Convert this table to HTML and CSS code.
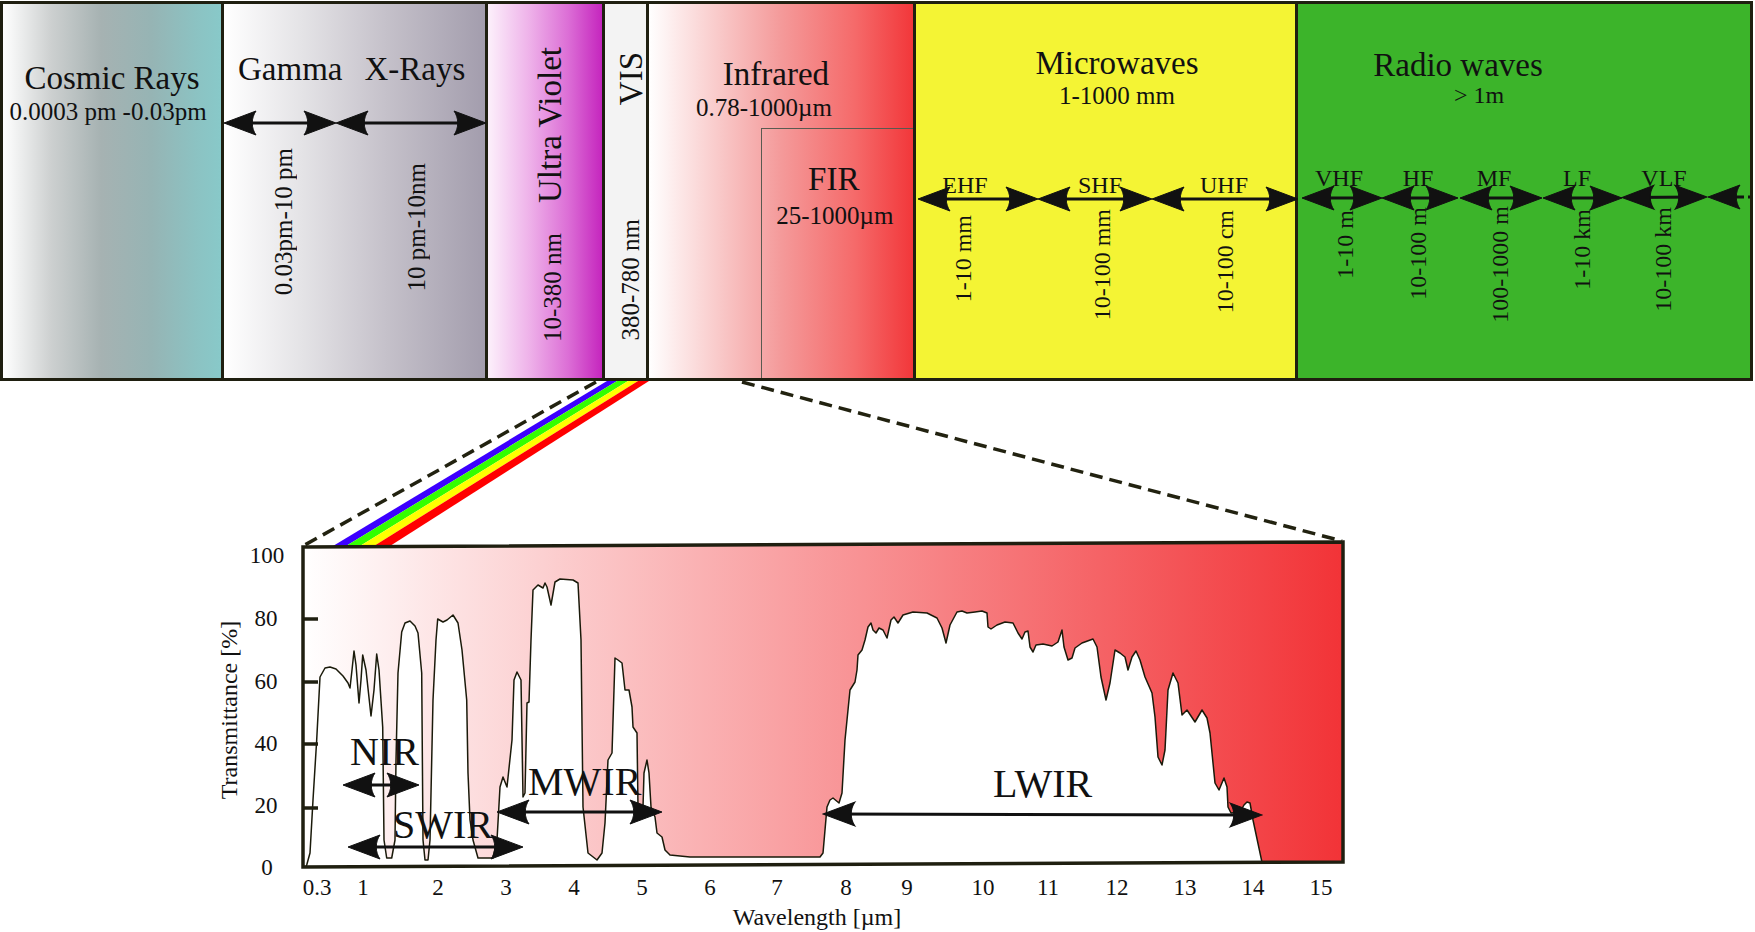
FILE: index.html
```html
<!DOCTYPE html>
<html lang="en">
<head>
<meta charset="utf-8">
<title>Electromagnetic spectrum</title>
<link rel="stylesheet" href="styles.css">
</head>
<body>
<div class="spectrum">
  <div class="band cosmic">
    <div class="title">Cosmic Rays</div>
    <div class="sub cosmic-sub">0.0003 pm -0.03pm</div>
  </div>
  <div class="band gx">
    <div class="gx-titles">
      <span class="title">Gamma</span>
      <span class="title">X-Rays</span>
    </div>
    <svg class="arrows gx-arrows" width="261" height="30" viewBox="0 0 261 30">
      <line class="arw" x1="6" y1="15" x2="106" y2="15" marker-start="url(#ah)" marker-end="url(#ah)"/>
      <line class="arw" x1="118" y1="15" x2="256" y2="15" marker-start="url(#ah)" marker-end="url(#ah)"/>
    </svg>
    <div class="gx-vert">
      <span class="vt small v1">0.03pm-10 pm</span>
      <span class="vt small v2">10 pm-10nm</span>
    </div>
  </div>
  <div class="band uv">
    <span class="vt title uv-title">Ultra Violet</span>
    <span class="vt small uv-range">10-380 nm</span>
  </div>
  <div class="band vis">
    <span class="vt title vis-title">VIS</span>
    <span class="vt small vis-range">380-780 nm</span>
  </div>
  <div class="band ir">
    <div class="title ir-title">Infrared</div>
    <div class="sub ir-sub">0.78-1000µm</div>
    <div class="fir">
      <div class="title fir-title">FIR</div>
      <div class="sub fir-sub">25-1000µm</div>
    </div>
  </div>
  <div class="band mw">
    <div class="title mw-title">Microwaves</div>
    <div class="sub mw-sub">1-1000 mm</div>
    <svg class="arrows mw-arrows" width="379" height="38" viewBox="0 0 379 38">
      <text class="arr-lbl" x="49" y="23">EHF</text>
      <text class="arr-lbl" x="184" y="23">SHF</text>
      <text class="arr-lbl" x="308" y="23">UHF</text>
      <line class="arw" x1="8" y1="29" x2="116" y2="29" marker-start="url(#ah)" marker-end="url(#ah)"/>
      <line class="arw" x1="128" y1="29" x2="230" y2="29" marker-start="url(#ah)" marker-end="url(#ah)"/>
      <line class="arw" x1="242" y1="29" x2="376" y2="29" marker-start="url(#ah)" marker-end="url(#ah)"/>
    </svg>
    <div class="mw-vert">
      <span class="vt tiny m1">1-10 mm</span>
      <span class="vt tiny m2">10-100 mm</span>
      <span class="vt tiny m3">10-100 cm</span>
    </div>
  </div>
  <div class="band radio">
    <div class="title radio-title">Radio waves</div>
    <div class="tiny radio-sub">&gt; 1m</div>
    <svg class="arrows radio-arrows" width="452" height="38" viewBox="0 0 452 38">
      <text class="arr-lbl" x="41" y="16">VHF</text>
      <text class="arr-lbl" x="120" y="16">HF</text>
      <text class="arr-lbl" x="196" y="16">MF</text>
      <text class="arr-lbl" x="279" y="16">LF</text>
      <text class="arr-lbl" x="366" y="16">VLF</text>
      <line class="arw" x1="10" y1="28" x2="78" y2="28" marker-start="url(#ah)" marker-end="url(#ah)"/>
      <line class="arw" x1="90" y1="28" x2="154" y2="28" marker-start="url(#ah)" marker-end="url(#ah)"/>
      <line class="arw" x1="168" y1="28" x2="238" y2="28" marker-start="url(#ah)" marker-end="url(#ah)"/>
      <line class="arw" x1="251" y1="28" x2="318" y2="28" marker-start="url(#ah)" marker-end="url(#ah)"/>
      <line class="arw" x1="330" y1="27.5" x2="403" y2="27" marker-start="url(#ah)" marker-end="url(#ah)"/>
      <line class="arw" x1="416" y1="27" x2="440" y2="27" marker-start="url(#ah)"/>
      <line class="arw-dash" x1="440" y1="27" x2="452" y2="27"/>
    </svg>
    <div class="radio-vert">
      <span class="vt tiny r1">1-10 m</span>
      <span class="vt tiny r2">10-100 m</span>
      <span class="vt tiny r3">100-1000 m</span>
      <span class="vt tiny r4">1-10 km</span>
      <span class="vt tiny r5">10-100 km</span>
    </div>
  </div>
</div>

<svg class="chart" width="1755" height="551" viewBox="0 381 1755 551">
  <defs>
    <linearGradient id="plotGrad" x1="0" y1="0" x2="1" y2="0">
      <stop offset="0" stop-color="#ffffff"/>
      <stop offset="1" stop-color="#f23337"/>
    </linearGradient>
    <marker id="ah" markerUnits="userSpaceOnUse" markerWidth="40" markerHeight="30" viewBox="-30 -15 40 30" refX="0" refY="0" orient="auto-start-reverse" overflow="visible">
      <path d="M6 0 L-26 -12 C-21 -5 -21 5 -26 12 Z" fill="#111" stroke="#111" stroke-width="1"/>
    </marker>
  </defs>

  <line class="dash" x1="596" y1="382" x2="303" y2="546"/>
  <line class="dash" x1="742" y1="382" x2="1342" y2="541"/>

  <polygon class="rb-blue" points="607,381 617,381 346,546 333,546"/>
  <polygon class="rb-green" points="617,381 628,381 360,546 346,546"/>
  <polygon class="rb-yellow" points="628,381 638,381 374,546 360,546"/>
  <polygon class="rb-red" points="638,381 649,381 390,546 374,546"/>

  <polygon class="plot-bg" points="303,547 1343,542 1343,862 303,867" fill="url(#plotGrad)"/>

  <path class="curve" d="M306,867 L306.7,865 L310,853 L313,800 L316.7,740 L320,677 L325,668 L330,667 L336,669 L343,676 L348,683 L350,688 L352,670 L354,651 L356,665 L359,703 L361,680 L362.7,655 L366,670 L371,716 L374,690 L376.7,654 L379,670 L382.7,727 L384,840 L386.7,858 L391.7,858 L395,840 L396,760 L398,673 L401.7,632 L405,623 L410,621 L415,626 L418,633 L421.7,673 L423,840 L425,860 L428,860 L430,840 L433,700 L436,640 L437.7,619 L443,622 L447,620 L453,615 L458,623 L462,650 L466.7,700 L468,773 L470,820 L473,840 L478,858 L493,858 L497,840 L500,787 L503,777 L507,787 L512,740 L514,680 L517,672 L521,680 L523,797 L525,793 L527,703 L529,702 L531,640 L533,590 L538,585 L543,588 L545,583 L547,587 L551,605 L555,582 L560,579 L573,580 L578,583 L581,640 L583,807 L588,853 L597,860 L602,853 L605,823 L608,760 L612,753 L615,658 L618,660 L622,663 L625,690 L629,690 L632,707 L633,727 L637,733 L638,807 L643,807 L644,773 L647,760 L649,773 L651,807 L655,817 L657,833 L662,837 L665,850 L670,855 L690,857 L820,857 L823,853 L827,807 L830,800 L833,798 L839,803 L842,793 L845,740 L850,690 L855,682 L857,670 L858,655 L862,650 L865,640 L868,627 L871,623 L873,630 L876,633 L879,628 L883,630 L887,638 L891,620 L894,617 L898,623 L903,615 L913,612 L927,613 L937,618 L942,628 L946,643 L950,625 L957,612 L962,611 L967,613 L975,612 L982,611 L987,613 L988,627 L991,629 L997,625 L1005,622 L1013,623 L1018,633 L1022,639 L1025,632 L1028,631 L1030,647 L1033,652 L1036,645 L1043,644 L1052,646 L1058,642 L1062,630 L1064,647 L1068,660 L1072,658 L1075,648 L1082,643 L1093,639 L1097,647 L1101,677 L1106,700 L1110,683 L1115,650 L1120,653 L1125,657 L1128,670 L1132,657 L1136,651 L1140,660 L1145,677 L1152,693 L1155,717 L1158,757 L1162,765 L1165,750 L1168,690 L1173,673 L1178,683 L1182,715 L1187,710 L1195,722 L1202,710 L1207,718 L1210,733 L1215,783 L1219,790 L1224,778 L1227,787 L1228,807 L1231,813 L1240,812 L1244,805 L1247,802 L1250,803 L1253,820 L1262,862.4 Z"/>

  <polygon class="frame" points="303,547 1343,542 1343,862 303,867"/>

  <line class="tick" x1="303" y1="619" x2="318" y2="619"/>
  <line class="tick" x1="303" y1="682" x2="318" y2="682"/>
  <line class="tick" x1="303" y1="744" x2="318" y2="744"/>
  <line class="tick" x1="303" y1="808" x2="318" y2="808"/>

  <text class="band-lbl" x="350" y="765">NIR</text>
  <text class="band-lbl" x="393" y="838">SWIR</text>
  <text class="band-lbl" x="528" y="795">MWIR</text>
  <text class="band-lbl" x="993" y="797">LWIR</text>

  <line class="arw" x1="349" y1="785" x2="413" y2="785" marker-start="url(#ah)" marker-end="url(#ah)"/>
  <line class="arw" x1="354" y1="847" x2="517" y2="847" marker-start="url(#ah)" marker-end="url(#ah)"/>
  <line class="arw" x1="503" y1="812" x2="656" y2="812" marker-start="url(#ah)" marker-end="url(#ah)"/>
  <line class="arw" x1="829" y1="814" x2="1256" y2="815" marker-start="url(#ah)" marker-end="url(#ah)"/>

  <text class="ax ax-y" x="267" y="563">100</text>
  <text class="ax ax-y" x="266" y="626">80</text>
  <text class="ax ax-y" x="266" y="689">60</text>
  <text class="ax ax-y" x="266" y="751">40</text>
  <text class="ax ax-y" x="266" y="813">20</text>
  <text class="ax ax-y" x="267" y="875">0</text>

  <text class="ax ax-x" x="317" y="895">0.3</text>
  <text class="ax ax-x" x="363" y="895">1</text>
  <text class="ax ax-x" x="438" y="895">2</text>
  <text class="ax ax-x" x="506" y="895">3</text>
  <text class="ax ax-x" x="574" y="895">4</text>
  <text class="ax ax-x" x="642" y="895">5</text>
  <text class="ax ax-x" x="710" y="895">6</text>
  <text class="ax ax-x" x="777" y="895">7</text>
  <text class="ax ax-x" x="846" y="895">8</text>
  <text class="ax ax-x" x="907" y="895">9</text>
  <text class="ax ax-x" x="983" y="895">10</text>
  <text class="ax ax-x" x="1048" y="895">11</text>
  <text class="ax ax-x" x="1117" y="895">12</text>
  <text class="ax ax-x" x="1185" y="895">13</text>
  <text class="ax ax-x" x="1253" y="895">14</text>
  <text class="ax ax-x" x="1321" y="895">15</text>

  <text class="axt" x="817" y="925">Wavelength [µm]</text>
  <text class="axt" transform="translate(237 710) rotate(-90)" x="0" y="0">Transmittance [%]</text>
</svg>
</body>
</html>
```

FILE: styles.css
```css
* {
  box-sizing: border-box;
}

html,
body {
  margin: 0;
  padding: 0;
  background: #ffffff;
}

body {
  width: 1755px;
  height: 932px;
  overflow: hidden;
  font-family: "Liberation Serif", "Times New Roman", serif;
  color: #111111;
}

/* ---------- spectrum bar ---------- */
.spectrum {
  display: flex;
  margin-top: 1px;
  height: 380px;
}

.band {
  flex: none;
  height: 100%;
  display: flex;
  flex-direction: column;
  align-items: center;
  border: 3px solid #1f1f10;
  border-left: 0;
}

.title {
  font-size: 33px;
  line-height: 33px;
  white-space: nowrap;
}

.sub,
.small {
  font-size: 25px;
  line-height: 25px;
  white-space: nowrap;
}

.tiny {
  font-size: 24px;
  line-height: 24px;
  white-space: nowrap;
}

.vt {
  writing-mode: vertical-rl;
  transform: rotate(180deg);
  white-space: nowrap;
}

.arrows {
  display: block;
  flex: none;
  overflow: visible;
}

.arrows text {
  font-size: 24px;
  fill: #111111;
  text-anchor: middle;
}

.arw {
  stroke: #111111;
  stroke-width: 3;
}

.arw-dash {
  stroke: #111111;
  stroke-width: 3;
  stroke-dasharray: 6 4;
}

/* cosmic */
.cosmic {
  width: 224px;
  border-left: 3px solid #1f1f10;
  padding-top: 58px;
  background: linear-gradient(to right, #ffffff 0%, #cdd0d0 22%, #a6b2b2 45%, #96b4b4 68%, #8cc2c2 88%, #88c9c9 100%);
}

.cosmic-sub {
  margin-top: 3.5px;
  margin-right: 8px;
}

/* gamma / x-rays */
.gx {
  width: 264px;
  align-items: flex-start;
  padding-top: 49px;
  background: linear-gradient(to right, #ffffff 0%, #e4e3e6 30%, #c5c1ca 62%, #a39dad 100%);
}

.gx-titles {
  display: flex;
  gap: 22px;
  padding-left: 14px;
}

.gx-arrows {
  margin-top: 22px;
}

.gx-vert {
  display: flex;
  align-items: flex-start;
  gap: 108px;
  padding-left: 46.5px;
}

.gx-vert .v1 {
  margin-top: 9.5px;
}

.gx-vert .v2 {
  margin-top: 25px;
}

/* ultra violet */
.uv {
  width: 117px;
  padding-top: 43px;
  background: linear-gradient(to right, #fcf0fb 0%, #efb4ea 35%, #dc6fd6 70%, #c526be 100%);
}

.uv-title {
  margin-left: 10px;
}

.uv-range {
  margin-top: 30.5px;
  margin-left: 14px;
}

/* visible */
.vis {
  width: 44px;
  padding-top: 47.5px;
  background: #f3f3f3;
}

.vis-title {
  margin-left: 11px;
}

.vis-range {
  margin-top: 114.5px;
  margin-left: 9px;
}

/* infrared */
.ir {
  width: 267px;
  padding-top: 53.5px;
  background: linear-gradient(to right, #ffffff 0%, #f8c2c2 30%, #f49a9a 50%, #f56a6a 78%, #f2373a 100%);
}

.ir-title {
  margin-right: 10px;
}

.ir-sub {
  margin-top: 4px;
  margin-right: 34px;
}

.fir {
  align-self: stretch;
  flex: 1;
  margin-left: 112px;
  margin-top: 8.5px;
  border-left: 1.5px solid #5a5a50;
  border-top: 1.5px solid #5a5a50;
  display: flex;
  flex-direction: column;
  align-items: center;
  padding-top: 34px;
}

.fir-title {
  margin-right: 7.5px;
}

.fir-sub {
  margin-top: 7px;
  margin-right: 5.5px;
}

/* microwaves */
.mw {
  width: 382px;
  padding-top: 42.5px;
  background: #f4f434;
}

.mw-title {
  margin-left: 23px;
}

.mw-sub {
  margin-top: 3.5px;
  margin-left: 23px;
}

.mw-arrows {
  margin-top: 62px;
  align-self: stretch;
}

.mw-vert {
  align-self: stretch;
  display: grid;
  grid-template-columns: 94px 184px 62px;
  align-items: start;
}

.mw-vert .vt,
.radio-vert .vt {
  justify-self: center;
}

.m1 { margin-top: 6.5px; }
.m2 { margin-top: 0.5px; }
.m3 { margin-top: 1.5px; }

/* radio */
.radio {
  width: 455px;
  padding-top: 44.5px;
  background: #3cb42a;
}

.radio-title {
  margin-right: 132px;
}

.radio-sub {
  margin-top: 1.5px;
  margin-right: 90px;
}

.radio-arrows {
  margin-top: 63px;
  align-self: stretch;
}

.radio-vert {
  align-self: stretch;
  display: grid;
  grid-template-columns: 94px 52px 112px 52px 110px;
  align-items: start;
}

.r1 { margin-top: 2px; }
.r2 { margin-top: -1px; }
.r3 { margin-top: -2px; }
.r4 { margin-top: 1px; }
.r5 { margin-top: -1px; }

/* ---------- transmittance chart ---------- */
.chart {
  display: block;
  overflow: visible;
}

.chart text {
  fill: #111111;
}

.dash {
  stroke: #222210;
  stroke-width: 3.5;
  stroke-dasharray: 13 7;
}

.rb-blue { fill: #3c00ff; }
.rb-green { fill: #33ff00; }
.rb-yellow { fill: #ffff00; }
.rb-red { fill: #ff0000; }

.curve {
  fill: #ffffff;
  stroke: #1a1a0a;
  stroke-width: 1.5;
  stroke-linejoin: round;
}

.frame {
  fill: none;
  stroke: #1f1f10;
  stroke-width: 3.5;
}

.tick {
  stroke: #1f1f10;
  stroke-width: 3.5;
}

.band-lbl {
  font-size: 40px;
}

.ax {
  font-size: 23px;
  text-anchor: middle;
}

.axt {
  font-size: 24px;
  text-anchor: middle;
}
```
